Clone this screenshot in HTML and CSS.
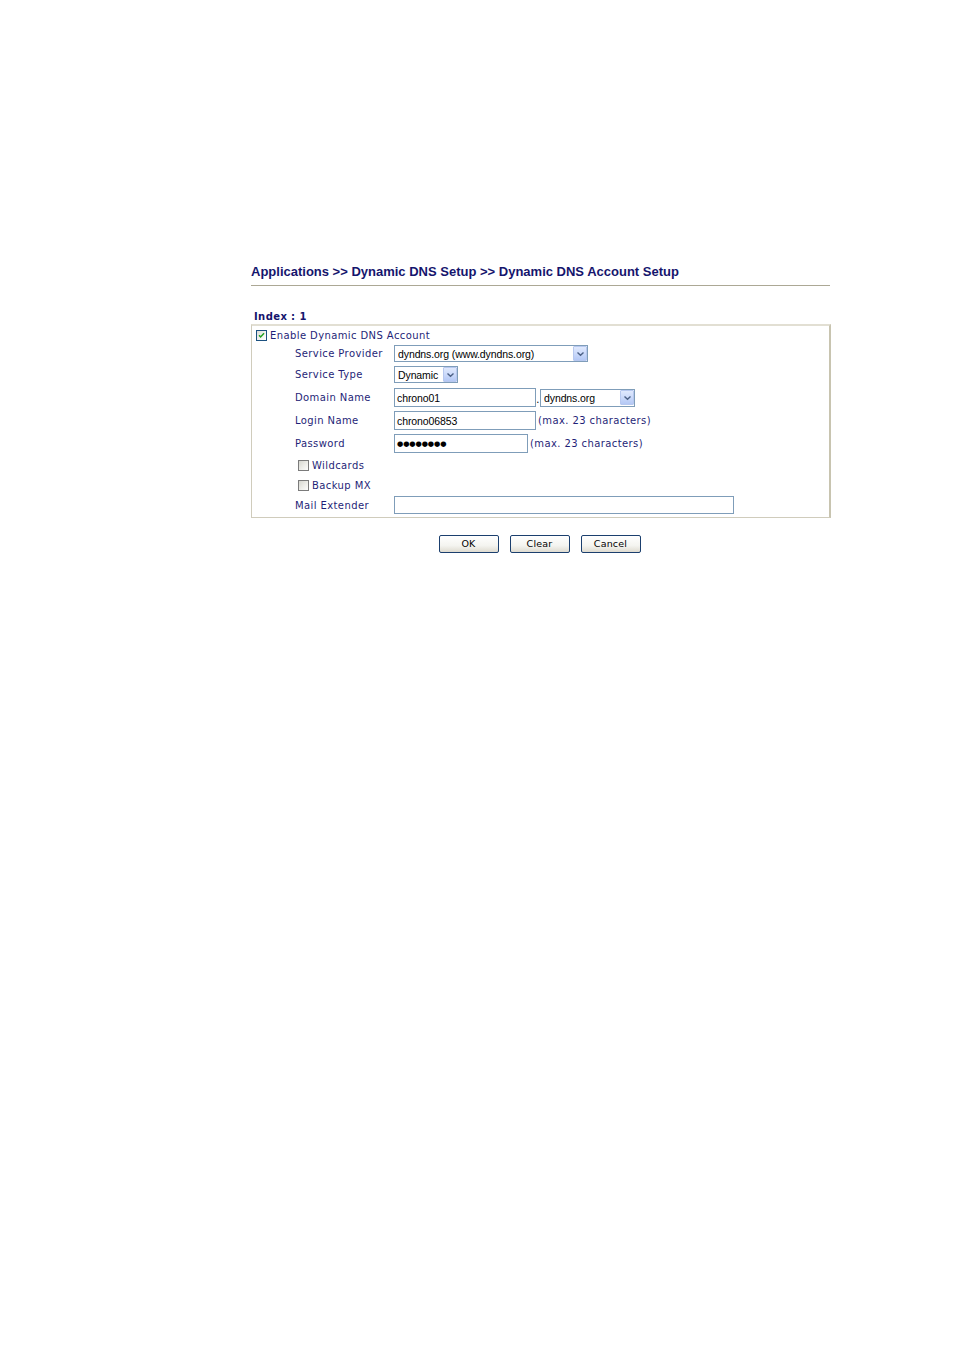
FILE: index.html
```html
<!DOCTYPE html>
<html>
<head>
<meta charset="utf-8">
<title>Dynamic DNS Account Setup</title>
<link rel="stylesheet" href="styles.css">
</head>
<body>
<div class="page">
  <div class="title">Applications &gt;&gt; Dynamic DNS Setup &gt;&gt; Dynamic DNS Account Setup</div>
  <div class="rule"></div>
  <div class="index">Index : 1</div>
  <div class="box">
    <div class="row r1">
      <span class="cb checked"><svg viewBox="0 0 11 11" width="11" height="11"><path d="M2.5 5.2 L4.4 7.3 L8.6 2.8" fill="none" stroke="#21a121" stroke-width="1.8"/></svg></span>
      <span class="txt">Enable Dynamic DNS Account</span>
    </div>
    <div class="row r2">
      <span class="label">Service Provider</span>
      <div class="select sel-provider"><span class="sv">dyndns.org (www.dyndns.org)</span><span class="arrow"><svg viewBox="0 0 9 6" width="9" height="6"><path d="M1.5 1.5 L4.5 4.3 L7.5 1.5" fill="none" stroke="#4d6185" stroke-width="1.4"/></svg></span></div>
    </div>
    <div class="row r3">
      <span class="label">Service Type</span>
      <div class="select sel-type"><span class="sv">Dynamic</span><span class="arrow"><svg viewBox="0 0 9 6" width="9" height="6"><path d="M1.5 1.5 L4.5 4.3 L7.5 1.5" fill="none" stroke="#4d6185" stroke-width="1.4"/></svg></span></div>
    </div>
    <div class="row r4">
      <span class="label">Domain Name</span>
      <div class="field f-domain">chrono01</div>
      <span class="dot">.</span>
      <div class="select sel-domain"><span class="sv">dyndns.org</span><span class="arrow"><svg viewBox="0 0 9 6" width="9" height="6"><path d="M1.5 1.5 L4.5 4.3 L7.5 1.5" fill="none" stroke="#4d6185" stroke-width="1.4"/></svg></span></div>
    </div>
    <div class="row r5">
      <span class="label">Login Name</span>
      <div class="field f-login">chrono06853</div>
      <span class="note">(max. 23 characters)</span>
    </div>
    <div class="row r6">
      <span class="label">Password</span>
      <div class="field f-pass"><span class="dots">●●●●●●●●</span></div>
      <span class="note">(max. 23 characters)</span>
    </div>
    <div class="row r7">
      <span class="cb sub"></span>
      <span class="txt">Wildcards</span>
    </div>
    <div class="row r8">
      <span class="cb sub"></span>
      <span class="txt">Backup MX</span>
    </div>
    <div class="row r9">
      <span class="label">Mail Extender</span>
      <div class="field f-mail"></div>
    </div>
  </div>
  <div class="buttons">
    <button class="btn">OK</button>
    <button class="btn">Clear</button>
    <button class="btn">Cancel</button>
  </div>
</div>
</body>
</html>
```

FILE: styles.css
```css
html, body {
  margin: 0;
  padding: 0;
  background: #ffffff;
}

.page {
  width: 580px;
  padding: 264px 0 0 251px;
}

.title {
  font-family: "Liberation Sans", Arial, sans-serif;
  font-weight: bold;
  font-size: 13px;
  line-height: 16px;
  color: #15156d;
  white-space: nowrap;
}

.rule {
  margin-top: 5px;
  height: 0;
  border-top: 1px solid #aca895;
  width: 579px;
}

.index {
  margin-top: 24px;
  padding-left: 3px;
  font-family: "DejaVu Sans", Verdana, sans-serif;
  font-weight: bold;
  font-size: 10px;
  letter-spacing: 0.4px;
  line-height: 14px;
  color: #15156d;
}

.box {
  margin-top: 0;
  width: 577px;
  border-top: 2px solid #e2dfd3;
  border-left: 1px solid #d0ccbc;
  border-right: 2px solid #c8c4b0;
  border-bottom: 1px solid #d0ccbc;
  padding: 0 0 2px 0;
  font-family: "DejaVu Sans", Verdana, sans-serif;
  font-size: 10px;
  letter-spacing: 0.4px;
  color: #1f1f78;
}

.row {
  display: flex;
  align-items: center;
}

.r1 { height: 18px; padding-left: 4px; }
.r2 { height: 19px; }
.r3 { height: 23px; }
.r4 { height: 23px; }
.r5 { height: 23px; }
.r6 { height: 23px; }
.r7 { height: 21px; padding-left: 46px; }
.r8 { height: 19px; padding-left: 46px; }
.r9 { height: 20px; }

.label {
  width: 99px;
  margin-left: 43px;
  white-space: nowrap;
}

.txt {
  margin-left: 3px;
  white-space: nowrap;
}

.cb {
  box-sizing: border-box;
  width: 11px;
  height: 11px;
  border: 1px solid #1c5180;
  background: linear-gradient(135deg, #dcdcd7 0%, #f5f5f2 60%, #ffffff 100%);
  display: flex;
  align-items: center;
  justify-content: center;
}

.cb svg {
  display: block;
  width: 9px;
  height: 9px;
}

.cb.sub {
  border-color: #7b7b7b;
  background: linear-gradient(135deg, #d6d6d0 0%, #efefeb 60%, #fbfbfb 100%);
}

.field, .select {
  box-sizing: border-box;
  border: 1px solid #7f9db9;
  background: #ffffff;
  font-family: "Liberation Sans", Arial, sans-serif;
  font-size: 10.5px;
  letter-spacing: -0.1px;
  color: #000000;
  display: flex;
  align-items: center;
  white-space: nowrap;
  overflow: hidden;
}

.field {
  padding-left: 2px;
}

.f-domain { width: 142px; height: 19px; }
.f-login { width: 142px; height: 19px; }
.f-pass { width: 134px; height: 19px; }
.f-mail { width: 340px; height: 18px; }

.dots {
  font-family: "DejaVu Sans", sans-serif;
  font-size: 7.2px;
  letter-spacing: -0.1px;
}

.select {
  height: 17px;
  padding-left: 3px;
  justify-content: space-between;
}

.sel-provider { width: 194px; }
.sel-type { width: 64px; }
.sel-domain { width: 95px; height: 18px; }

.sv {
  flex: 1;
  overflow: hidden;
}

.arrow {
  box-sizing: border-box;
  width: 14px;
  height: 15px;
  border: 1px solid #b7c8ef;
  border-radius: 1px;
  background: linear-gradient(180deg, #e0e9fd 0%, #c9d8fa 55%, #b4c8f5 100%);
  display: flex;
  align-items: center;
  justify-content: center;
  flex: none;
}

.arrow svg {
  display: block;
}

.dot {
  width: 4px;
  text-align: center;
  color: #000000;
  align-self: flex-end;
  margin-bottom: 4px;
  line-height: 10px;
}

.note {
  margin-left: 2px;
  white-space: nowrap;
}

.buttons {
  width: 577px;
  display: flex;
  justify-content: center;
  gap: 11px;
  margin-top: 17px;
}

.btn {
  box-sizing: border-box;
  width: 60px;
  height: 18px;
  padding: 0;
  margin: 0;
  border: 1px solid #1b3f6e;
  border-radius: 2px;
  background: linear-gradient(180deg, #ffffff 0%, #f4f4f0 60%, #dedbd0 100%);
  font-family: "DejaVu Sans", Verdana, sans-serif;
  font-size: 9.5px;
  letter-spacing: 0.2px;
  color: #000000;
  line-height: 16px;
}
```
